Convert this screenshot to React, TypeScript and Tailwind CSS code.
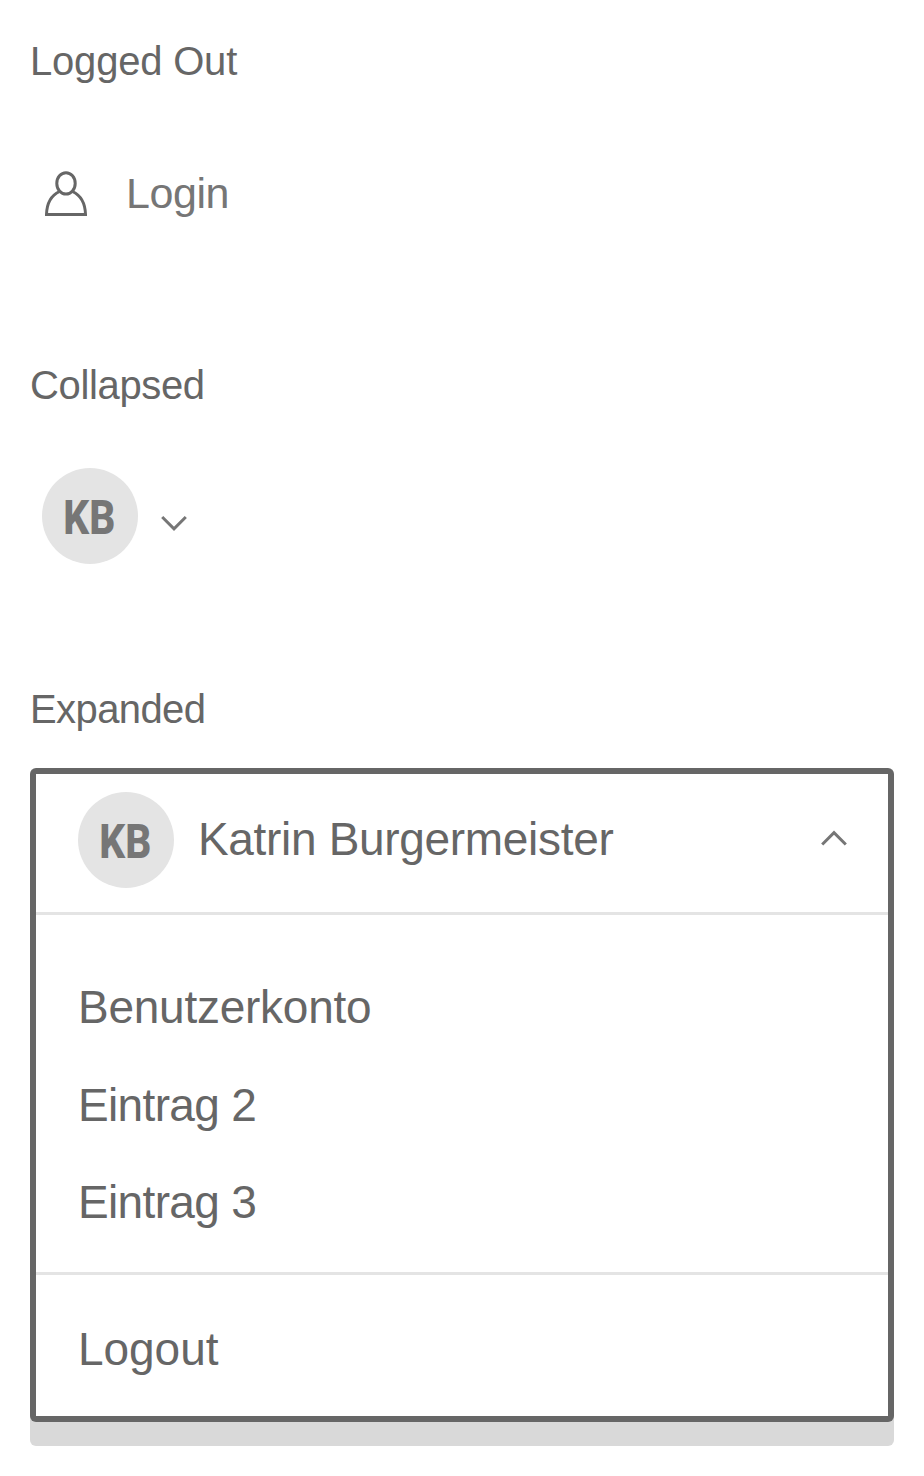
function Avatar() {
  return (
    <div className="flex size-24 shrink-0 items-center justify-center rounded-full bg-[#e4e4e4]">
      <span className="mt-[2px] mr-[2px] inline-block origin-center scale-x-[0.83] font-['Roboto','Liberation_Sans',sans-serif] text-[49px] leading-none font-extrabold text-[#767676]">
        KB
      </span>
    </div>
  );
}

function UserIcon() {
  return (
    <svg width="42" height="46" viewBox="0 0 42 46" fill="none" stroke="#666" strokeWidth="3" className="mt-px shrink-0">
      <ellipse cx="21" cy="12.4" rx="9.2" ry="10.7" />
      <path d="M14.5 20.5C7 24 1.8 32 1.5 43.5H40.5C40.2 32 35 24 27.5 20.5" />
    </svg>
  );
}

function Chevron({ up = false }: { up?: boolean }) {
  return (
    <svg width="26" height="16" viewBox="0 0 26 16" fill="none" stroke="#767676" strokeWidth="3" className="shrink-0">
      <path d={up ? "M1.2 14.5L13 2.7L24.8 14.5" : "M1.2 2L13 13.8L24.8 2"} />
    </svg>
  );
}

const entries = [
  { label: "Benutzerkonto", spacing: "tracking-[-0.25px]" },
  { label: "Eintrag 2", spacing: "tracking-[-0.65px]" },
  { label: "Eintrag 3", spacing: "tracking-[-0.65px]" },
];

export default function App() {
  return (
    <main className="flex h-[1476px] w-[924px] flex-col bg-white px-[30px] pt-[37px] font-['Liberation_Sans',Arial,sans-serif] text-[#666]">
      <section className="h-[324px]">
        <h2 className="text-[40px] leading-[48px] tracking-[-0.2px]">Logged Out</h2>
        <button className="mt-[84px] ml-[15px] flex h-12 items-center gap-[39px] text-[#767676]">
          <UserIcon />
          <span className="text-[43px] leading-[48px] tracking-[-0.45px]">Login</span>
        </button>
      </section>
      <section className="h-[324px]">
        <h2 className="text-[40px] leading-[48px] tracking-[-0.35px]">Collapsed</h2>
        <button className="mt-[59px] ml-3 flex items-center gap-[23px]">
          <Avatar />
          <span className="pt-[14px]">
            <Chevron />
          </span>
        </button>
      </section>
      <section>
        <h2 className="text-[40px] leading-[48px] tracking-[-0.6px]">Expanded</h2>
        <div className="mt-[35px] h-[654px] rounded-md bg-[#666] p-[6px] shadow-[0_24px_0_#d9d9d9]">
          <div className="h-full bg-white">
            <button className="flex h-[141px] w-full items-start border-b-[3px] border-[#e4e4e4] pt-[18px] pr-[41px] pl-[42px]">
              <Avatar />
              <span className="ml-6 flex-1 text-left text-[46px] leading-[94px] tracking-[-0.32px]">Katrin Burgermeister</span>
              <span className="mt-[38px]">
                <Chevron up />
              </span>
            </button>
            <ul className="flex h-[360px] flex-col gap-[41.5px] border-b-[3px] border-[#e4e4e4] pt-16 pl-[42px] text-[46px] leading-[56px]">
              {entries.map(({ label, spacing }) => (
                <li key={label} className={spacing}>
                  {label}
                </li>
              ))}
            </ul>
            <button className="mt-[46px] ml-[42px] block text-[46px] leading-[56px] tracking-[-0.05px]">Logout</button>
          </div>
        </div>
      </section>
    </main>
  );
}
